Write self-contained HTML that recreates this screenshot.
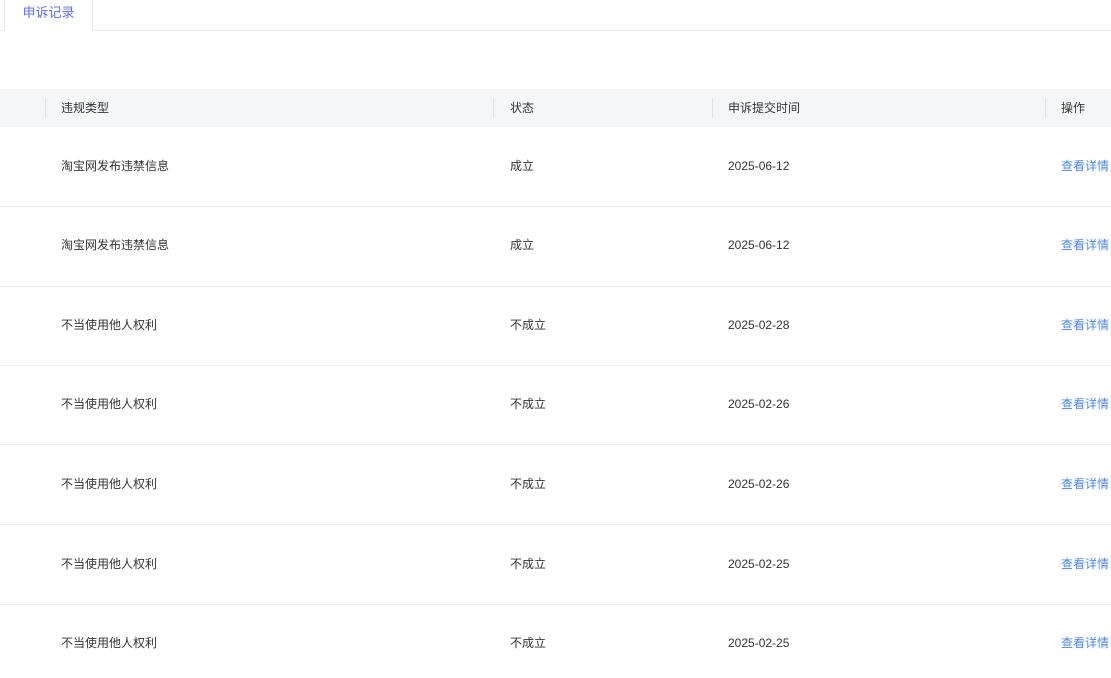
<!DOCTYPE html>
<html><head><meta charset="utf-8"><style>
*{margin:0;padding:0;box-sizing:border-box}
body{width:1111px;height:678px;background:#fff;font-family:"Liberation Sans","Noto Sans CJK SC",sans-serif;font-size:12px;color:#333;position:relative;overflow:hidden}
.tabbar{position:absolute;left:0;top:0;width:1111px;height:31px;border-bottom:1px solid #e8e8ee}
.tab{position:absolute;left:4px;top:-1px;width:89px;height:32px;border:1px solid #e4e4ec;border-bottom:1px solid #fff;background:#fff;color:#5a6cf5;font-size:13px;text-align:center;line-height:25px}
.head{position:absolute;left:0;top:89px;width:1111px;height:38px;background:#f5f6f8}
.dv{position:absolute;top:9px;width:1px;height:20px;background:#e3e4e8}
.t{position:absolute;white-space:nowrap;line-height:16px}
.sep{position:absolute;left:0;width:1111px;height:1px;background:#ededf0}
.a{color:#4c86f0}
</style></head><body>
<div class="tabbar"><div class="tab">申诉记录</div></div>
<div class="head">
<div class="dv" style="left:45px"></div><div class="dv" style="left:493px"></div><div class="dv" style="left:712px"></div><div class="dv" style="left:1045px"></div>
<div class="t" style="left:61px;top:11px">违规类型</div>
<div class="t" style="left:510px;top:11px">状态</div>
<div class="t" style="left:728px;top:11px">申诉提交时间</div>
<div class="t" style="left:1061px;top:11px">操作</div>
</div>
<div class="sep" style="top:206px"></div><div class="sep" style="top:286px"></div><div class="sep" style="top:365px"></div><div class="sep" style="top:444px"></div><div class="sep" style="top:524px"></div><div class="sep" style="top:604px"></div>

<div class="t" style="left:61px;top:158px">淘宝网发布违禁信息</div><div class="t" style="left:510px;top:158px">成立</div><div class="t" style="left:728px;top:158px">2025-06-12</div><div class="t a" style="left:1061px;top:158px">查看详情</div>
<div class="t" style="left:61px;top:237px">淘宝网发布违禁信息</div><div class="t" style="left:510px;top:237px">成立</div><div class="t" style="left:728px;top:237px">2025-06-12</div><div class="t a" style="left:1061px;top:237px">查看详情</div>
<div class="t" style="left:61px;top:317px">不当使用他人权利</div><div class="t" style="left:510px;top:317px">不成立</div><div class="t" style="left:728px;top:317px">2025-02-28</div><div class="t a" style="left:1061px;top:317px">查看详情</div>
<div class="t" style="left:61px;top:396px">不当使用他人权利</div><div class="t" style="left:510px;top:396px">不成立</div><div class="t" style="left:728px;top:396px">2025-02-26</div><div class="t a" style="left:1061px;top:396px">查看详情</div>
<div class="t" style="left:61px;top:476px">不当使用他人权利</div><div class="t" style="left:510px;top:476px">不成立</div><div class="t" style="left:728px;top:476px">2025-02-26</div><div class="t a" style="left:1061px;top:476px">查看详情</div>
<div class="t" style="left:61px;top:556px">不当使用他人权利</div><div class="t" style="left:510px;top:556px">不成立</div><div class="t" style="left:728px;top:556px">2025-02-25</div><div class="t a" style="left:1061px;top:556px">查看详情</div>
<div class="t" style="left:61px;top:635px">不当使用他人权利</div><div class="t" style="left:510px;top:635px">不成立</div><div class="t" style="left:728px;top:635px">2025-02-25</div><div class="t a" style="left:1061px;top:635px">查看详情</div>
</body></html>
